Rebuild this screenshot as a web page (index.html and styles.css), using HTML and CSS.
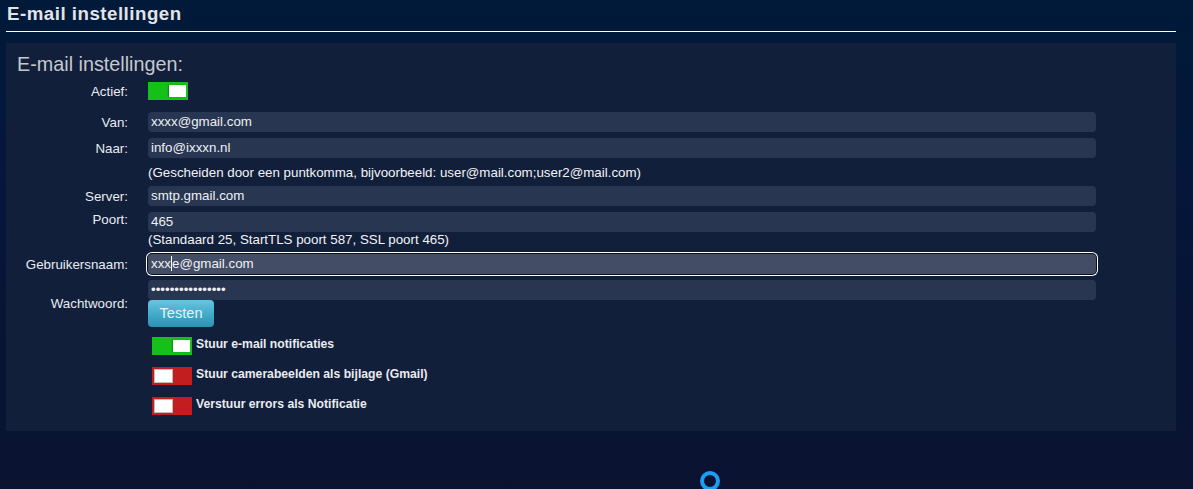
FILE: index.html
```html
<!DOCTYPE html>
<html lang="nl">
<head>
<meta charset="utf-8">
<title>E-mail instellingen</title>
<link rel="stylesheet" href="styles.css">
</head>
<body>
<div class="page">
  <h1 class="page-title">E-mail instellingen</h1>
  <section class="panel">
    <h2 class="panel-title">E-mail instellingen:</h2>
    <div class="form">
      <div class="row row-actief">
        <span class="label">Actief:</span>
        <div class="control"><span class="toggle on"><span class="knob"></span></span></div>
      </div>
      <div class="row row-van">
        <span class="label">Van:</span>
        <div class="control"><input class="input" type="text" value="xxxx@gmail.com"></div>
      </div>
      <div class="row row-tight">
        <span class="label">Naar:</span>
        <div class="control"><input class="input" type="text" value="info@ixxxn.nl"></div>
      </div>
      <div class="row hint-row">
        <span class="label"></span>
        <div class="control hint">(Gescheiden door een puntkomma, bijvoorbeeld: user@mail.com;user2@mail.com)</div>
      </div>
      <div class="row row-server">
        <span class="label">Server:</span>
        <div class="control"><input class="input" type="text" value="smtp.gmail.com"></div>
      </div>
      <div class="row row-tight row-top">
        <span class="label">Poort:</span>
        <div class="control">
          <input class="input" type="text" value="465">
          <div class="hint">(Standaard 25, StartTLS poort 587, SSL poort 465)</div>
        </div>
      </div>
      <div class="row row-user">
        <span class="label">Gebruikersnaam:</span>
        <div class="control"><div class="input focused">xxx<span class="caret"></span>e@gmail.com</div></div>
      </div>
      <div class="row row-tight">
        <span class="label">Wachtwoord:</span>
        <div class="control">
          <input class="input" type="password" value="abcdefghijklmnop">
          <button class="btn" type="button">Testen</button>
        </div>
      </div>
      <div class="switches">
        <div class="switch-row"><span class="toggle on"><span class="knob"></span></span><span class="switch-label">Stuur e-mail notificaties</span></div>
        <div class="switch-row"><span class="toggle off"><span class="knob"></span></span><span class="switch-label">Stuur camerabeelden als bijlage (Gmail)</span></div>
        <div class="switch-row"><span class="toggle off"><span class="knob"></span></span><span class="switch-label">Verstuur errors als Notificatie</span></div>
      </div>
    </div>
  </section>
</div>
<div class="spinner"></div>
</body>
</html>
```
FILE: styles.css
```css
html, body {
  margin: 0;
  padding: 0;
  height: 100%;
}
body {
  background: linear-gradient(180deg, #011a39 0%, #05163a 40%, #0a1230 100%);
  font-family: "Liberation Sans", Arial, sans-serif;
  color: #e9ecf0;
  overflow: hidden;
  position: relative;
}
.page {
  width: 1170px;
  margin-left: 6px;
}
.page-title {
  margin: 0;
  padding: 3px 0 6px 1px;
  font-size: 18.7px;
  line-height: 22px;
  font-weight: bold;
  letter-spacing: 0.5px;
  color: #e2e4e8;
  border-bottom: 1px solid #ffffff;
}
.panel {
  margin-top: 11px;
  background: #121f3b;
  padding: 9px 0 16px 0;
}
.panel-title {
  margin: 0 0 0 11px;
  font-size: 19.8px;
  line-height: 24px;
  font-weight: normal;
  color: #c4c8cf;
}
.form {
  display: flex;
  flex-direction: column;
}
.row {
  display: flex;
  align-items: center;
  gap: 20px;
}
.row-top {
  align-items: flex-start;
}
.label {
  width: 122px;
  flex: none;
  text-align: right;
  font-size: 13.33px;
  line-height: 15px;
  color: #e9ecf0;
}
.control {
  width: 948px;
  display: flex;
  flex-direction: column;
  align-items: flex-start;
}
.row-actief { margin-top: 6px; }
.row-van { margin-top: 12px; }
.row-tight { margin-top: 6px; }
.hint-row { margin-top: 7px; }
.row-server { margin-top: 6px; }
.row-user { margin-top: 7px; }

.input {
  box-sizing: border-box;
  width: 948px;
  height: 20px;
  border: none;
  border-radius: 4px;
  background: #283651;
  color: #eef0f4;
  font-family: "Liberation Sans", Arial, sans-serif;
  font-size: 13.33px;
  line-height: 20px;
  padding: 0 3px;
  margin: 0;
  outline: none;
}
.input.focused {
  background: #434e66;
  box-shadow: 0 0 0 1px #0b0f18, 0 0 0 2px #ffffff;
  border-radius: 4px;
}
.caret {
  display: inline-block;
  width: 1px;
  height: 15px;
  background: #ffffff;
  vertical-align: -3px;
}
.hint {
  font-size: 13.33px;
  line-height: 15px;
  color: #f2f3f5;
}
.btn {
  height: 27px;
  padding: 0;
  border: none;
  border-radius: 4px;
  background: linear-gradient(180deg, #68c4df 0%, #3fa6c6 60%, #2e93b3 100%);
  color: #e8f3f8;
  font-family: "Liberation Sans", Arial, sans-serif;
  font-size: 14.6px;
  line-height: 27px;
  width: 66px;
}
.toggle {
  box-sizing: border-box;
  display: flex;
  width: 40px;
  height: 18px;
  padding: 3px 2px;
  flex: none;
}
.toggle.on {
  background: #15c118;
  justify-content: flex-end;
}
.toggle.off {
  background: #c21d1f;
  justify-content: flex-start;
  padding: 2px 2px;
}
.knob {
  display: block;
  width: 17px;
  height: 12px;
  background: #ffffff;
}
.toggle.on .knob {
  box-shadow: -1px 0 1px rgba(0, 0, 0, 0.25);
}
.toggle.off .knob {
  box-sizing: border-box;
  width: 19px;
  height: 14px;
  border: 1px solid #bdbdbd;
}
.switches {
  margin: 10px 0 0 146px;
  display: flex;
  flex-direction: column;
  gap: 12px;
}
.switch-row {
  display: flex;
  align-items: center;
  gap: 4px;
}
.switch-label {
  font-size: 12.2px;
  line-height: 15px;
  font-weight: bold;
  color: #e9ecf0;
  margin-top: -3px;
}
.spinner {
  position: absolute;
  left: 700px;
  top: 471px;
  width: 20px;
  height: 20px;
  box-sizing: border-box;
  border: 4px solid #1c9cf2;
  border-radius: 50%;
}
```
